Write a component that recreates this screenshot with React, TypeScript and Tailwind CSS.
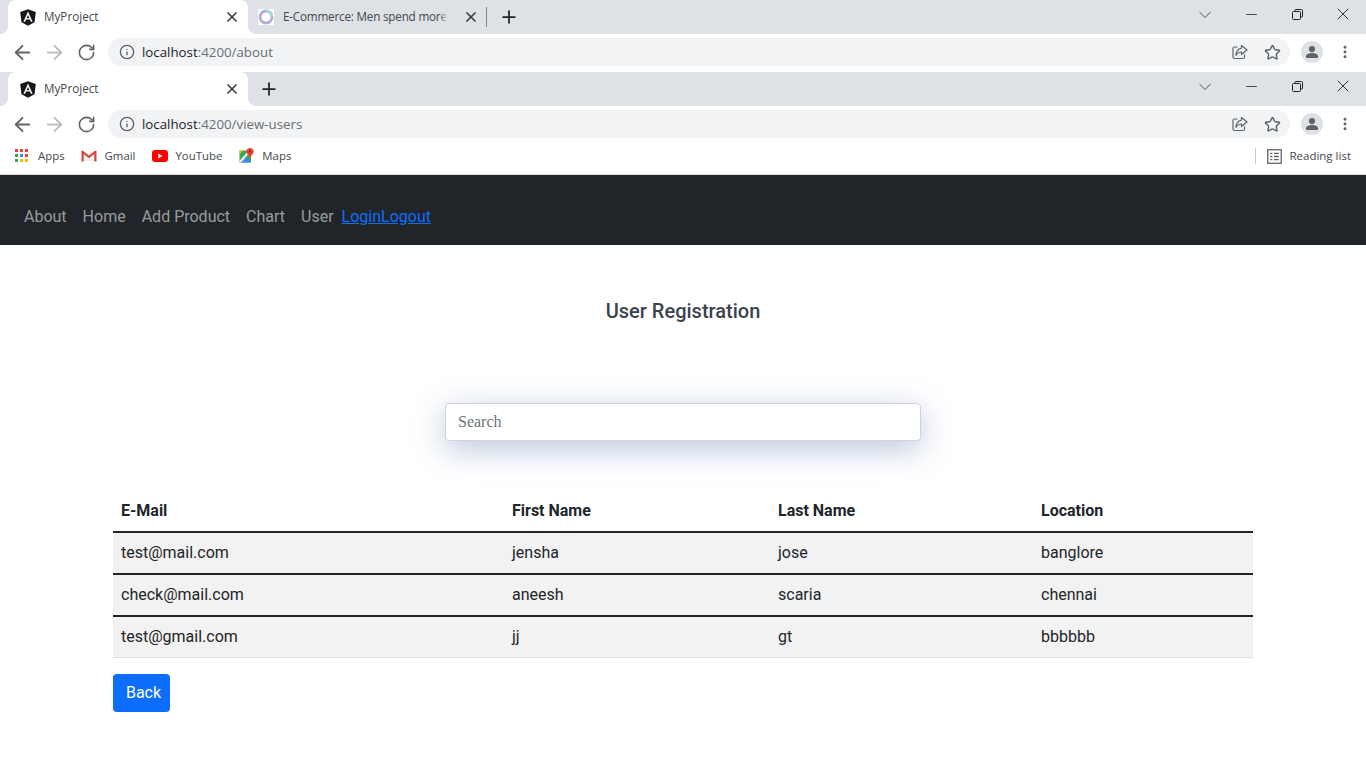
import { ArrowLeft, ArrowRight, RotateCw, Info, Star, MoreVertical, X, Plus, ChevronDown, Minus } from "lucide-react";

const chromeFont = { fontFamily: '"Open Sans", "Noto Sans", sans-serif' };

function AngularLogo() {
  return (
    <svg width="16" height="17" viewBox="0 0 16 17">
      <path d="M8 0.3 L15.8 3 L14.5 13.2 L8 16.8 L1.5 13.2 L0.2 3 Z" fill="#16181b" />
      <path d="M8 2.6 L3.4 12.8 H5.1 L6 10.5 H10 L10.9 12.8 H12.6 Z M8 6 L9.4 9.2 H6.6 Z" fill="#fff" fillRule="evenodd" />
    </svg>
  );
}

function ShareIcon() {
  return (
    <svg width="16" height="16" viewBox="0 0 16 16" fill="none" stroke="#5f6368" strokeWidth="1.2">
      <path d="M5.5 3 H2.5 Q1 3 1 4.5 V13 Q1 14.5 2.5 14.5 H11 Q12.5 14.5 12.5 13 V10.5" />
      <path d="M9.5 1.5 L15 6 L9.5 10.5 V8 Q6 7.8 4 11.5 Q4.2 5.5 9.5 4 Z" strokeLinejoin="round" />
    </svg>
  );
}

function Avatar() {
  return (
    <div className="w-[22px] h-[22px] rounded-full bg-[#dee1e6] overflow-hidden flex items-center justify-center">
      <svg width="14" height="14" viewBox="0 0 14 14" fill="#5f6368">
        <circle cx="7" cy="4" r="3.1" />
        <path d="M1 13 V11.3 C1 9 4.5 8 7 8 C9.5 8 13 9 13 11.3 V13 Z" />
      </svg>
    </div>
  );
}

function RestoreIcon() {
  return (
    <svg width="11" height="11" viewBox="0 0 11 11" fill="none" stroke="#202124" strokeWidth="1">
      <rect x="0.5" y="2.5" width="8" height="8" rx="1" />
      <path d="M3 2.5 V1.5 Q3 0.5 4 0.5 H9.5 Q10.5 0.5 10.5 1.5 V7 Q10.5 8 9.5 8 H8.5" />
    </svg>
  );
}

function Tab({ title, logo }: { title: string; logo: React.ReactNode }) {
  return (
    <div className="relative w-[240px] h-[34px] bg-white rounded-t-lg flex items-center pl-[12px] pr-[8px] shrink-0">
      {/* flared bottom corners */}
      <div className="absolute -left-[8px] bottom-0 w-[8px] h-[8px] bg-white">
        <div className="w-full h-full bg-[#dee1e6] rounded-br-lg" />
      </div>
      <div className="absolute -right-[8px] bottom-0 w-[8px] h-[8px] bg-white">
        <div className="w-full h-full bg-[#dee1e6] rounded-bl-lg" />
      </div>
      {logo}
      <span className="ml-[8px] text-[11.7px] text-[#45484d] flex-1 whitespace-nowrap">{title}</span>
      <X size={16} color="#3c4043" strokeWidth={2.6} />
    </div>
  );
}

function WindowControls() {
  return (
    <div className="ml-auto flex items-center h-full">
      <ChevronDown size={20} color="#3c4043" strokeWidth={1.1} className="mb-[4px]" />
      <div className="w-[46px] ml-[13px] mb-[6px] flex justify-center"><Minus size={17} color="#202124" strokeWidth={1.1} /></div>
      <div className="w-[46px] mb-[6px] flex justify-center"><RestoreIcon /></div>
      <div className="w-[46px] mb-[6px] flex justify-center"><X size={20} color="#202124" strokeWidth={1.1} /></div>
    </div>
  );
}

function Toolbar({ host, path, h }: { host: string; path: string; h: string }) {
  return (
    <div className={`${h} bg-white flex items-start`}>
      <div className="flex items-center h-[28px] mt-[4px] w-full">
        <ArrowLeft size={23} color="#5f6368" strokeWidth={1.9} className="ml-[10.5px]" />
        <ArrowRight size={23} color="#bcbfc3" strokeWidth={1.9} className="ml-[9px]" />
        <RotateCw size={19} color="#5f6368" strokeWidth={2} className="ml-[11px]" />
        <div className="ml-[12.5px] w-[1182px] h-[28px] rounded-full bg-[#f1f3f4] flex items-center pl-[11px] pr-[9.5px]">
          <Info size={16} color="#5f6368" strokeWidth={2} />
          <span className="ml-[7px] pt-[2px] text-[13.3px] text-[#202124] whitespace-nowrap">{host}<span className="text-[#6a6e73]">{path}</span></span>
          <div className="ml-auto flex items-center gap-[16px]">
            <ShareIcon />
            <Star size={17} color="#5f6368" strokeWidth={2} />
          </div>
        </div>
        <div className="ml-[11px]"><Avatar /></div>
        <MoreVertical size={16} color="#5f6368" strokeWidth={2.4} className="ml-[14px]" />
      </div>
    </div>
  );
}

function Bookmark({ icon, label, gap }: { icon: React.ReactNode; label: string; gap: string }) {
  return (
    <div className={`flex items-center ${gap}`}>
      {icon}
      <span className="text-[11.4px] text-[#45484d] whitespace-nowrap">{label}</span>
    </div>
  );
}

const appColors = ["#ea4335", "#ea4335", "#ea4335", "#34a853", "#4285f4", "#ea4335", "#34a853", "#fbbc04", "#fbbc04"];

function AppsIcon() {
  return (
    <div className="grid grid-cols-3 gap-[2px] w-[13px]">
      {appColors.map((c, i) => (
        <div key={i} className="w-[3px] h-[3px]" style={{ background: c }} />
      ))}
    </div>
  );
}

function GmailIcon() {
  return (
    <svg width="16" height="12" viewBox="0 0 16 12">
      <path d="M1 1 L8 6.5 L15 1 V11 H1 Z" fill="#eeeeee" />
      <path d="M0.5 11.5 V0.8 L2 0.8 L8 5.6 L14 0.8 L15.5 0.8 V11.5 H13.3 V4 L8 8.2 L2.7 4 V11.5 Z" fill="#d6463a" />
    </svg>
  );
}

function YoutubeIcon() {
  return (
    <svg width="16" height="12" viewBox="0 0 16 12">
      <rect width="16" height="12" rx="3" fill="#ff0000" />
      <path d="M6.3 3.5 L10.5 6 L6.3 8.5 Z" fill="#fff" />
    </svg>
  );
}

function MapsIcon() {
  return (
    <svg width="15" height="15" viewBox="0 0 15 15">
      <path d="M0.5 2.5 H12 V14.5 H0.5 Z" fill="#34a853" />
      <path d="M1.5 14.5 L6.5 9 L12 14.5 Z" fill="#4285f4" />
      <path d="M0.5 2.5 H4 L0.5 6.5 Z" fill="#fbbc04" />
      <path d="M0.5 13 L9 3 L10.5 5 L2 14.5 H0.5 Z" fill="#f1f1ea" />
      <path d="M11 0 C13 0 14.7 1.5 14.7 3.5 C14.7 5.8 12 7.5 11 10 C10 7.5 7.3 5.8 7.3 3.5 C7.3 1.5 9 0 11 0 Z" fill="#ea4335" />
      <circle cx="11" cy="3.5" r="1.2" fill="#a52714" />
    </svg>
  );
}

function ReadingIcon() {
  return (
    <svg width="15" height="15" viewBox="0 0 14 14" fill="none" stroke="#5f6368" strokeWidth="1.2">
      <rect x="0.7" y="0.7" width="12.6" height="12.6" />
      <path d="M3 4 H5 M6.5 4 H11 M3 7 H5 M6.5 7 H11 M3 10 H5 M6.5 10 H11" />
    </svg>
  );
}

function Ecommerce() {
  return (
    <svg width="16" height="16" viewBox="0 0 16 16" fill="none" strokeWidth="2.8">
      <rect width="16" height="16" fill="#fff" />
      <circle cx="8" cy="8" r="6" stroke="#b2aed8" />
      <path d="M8 2 A6 6 0 0 1 14 8" stroke="#a2dcd4" />
    </svg>
  );
}

const navItems = ["About", "Home", "Add Product", "Chart", "User"];

const users = [
  { email: "test@mail.com", first: "jensha", last: "jose", loc: "banglore" },
  { email: "check@mail.com", first: "aneesh", last: "scaria", loc: "chennai" },
  { email: "test@gmail.com", first: "jj", last: "gt", loc: "bbbbbb" },
];

export default function App() {
  return (
    <div className="min-h-[768px] bg-white overflow-hidden font-['Roboto',sans-serif]">
      <div style={chromeFont}>
        {/* first browser window */}
        <div className="h-[34px] bg-[#dee1e6] flex pl-[8px]">
          <Tab title="MyProject" logo={<AngularLogo />} />
          <div className="w-[240px] flex items-center pl-[10px] relative">
            <Ecommerce />
            <div className="relative ml-[9px] w-[165px] overflow-hidden">
              <span className="block text-[11.7px] tracking-[-0.2px] text-[#45484d] whitespace-nowrap">E-Commerce: Men spend more than</span>
              <div className="absolute right-0 top-0 h-full w-[8px] bg-gradient-to-r from-transparent to-[#dee1e6]" />
            </div>
            <X size={16} color="#3c4043" strokeWidth={2.6} className="ml-[15px]" />
            <div className="ml-[7px] w-[1px] h-[20px] bg-[#80868b]" />
          </div>
          <Plus size={20} color="#202124" strokeWidth={2.1} className="self-center ml-[11px]" />
          <WindowControls />
        </div>
        <Toolbar h="h-[38px]" host="localhost" path=":4200/about" />
        {/* second browser window */}
        <div className="h-[34px] bg-[#dee1e6] flex pl-[8px]">
          <Tab title="MyProject" logo={<AngularLogo />} />
          <Plus size={20} color="#202124" strokeWidth={2.1} className="self-center ml-[11px]" />
          <WindowControls />
        </div>
        <Toolbar h="h-[32px]" host="localhost" path=":4200/view-users" />
        <div className="h-[37px] bg-white border-b border-[#d9dbde] flex items-center pl-[15px]">
          <Bookmark icon={<AppsIcon />} label="Apps" gap="gap-[10px]" />
          <div className="ml-[16px]"><Bookmark icon={<GmailIcon />} label="Gmail" gap="gap-[8px]" /></div>
          <div className="ml-[16px]"><Bookmark icon={<YoutubeIcon />} label="YouTube" gap="gap-[8px]" /></div>
          <div className="ml-[17px]"><Bookmark icon={<MapsIcon />} label="Maps" gap="gap-[8px]" /></div>
          <div className="ml-auto flex items-center">
            <div className="w-[1px] h-[16px] bg-[#c8cacd] mr-[11px]" />
            <ReadingIcon />
            <span className="ml-[7.5px] mr-[15px] text-[11.5px] text-[#45484d] whitespace-nowrap">Reading list</span>
          </div>
        </div>
      </div>

      <nav className="h-[70px] bg-[#212529] flex items-center pl-[16px] pt-[14px] text-[16px]">
        {navItems.map((n) => (
          <a key={n} className="px-[8px] text-[#ffffff8c] whitespace-nowrap">{n}</a>
        ))}
        <a className="text-[#0d6efd] underline">Login</a>
        <a className="text-[#0d6efd] underline">Logout</a>
      </nav>

      <h2 className="mt-[52px] text-center text-[20px] leading-[28px] font-medium text-[#3b4350]">User Registration</h2>

      <div className="mt-[78px] flex justify-center">
        <input
          placeholder="Search"
          className="w-[476px] h-[38px] rounded-[4px] border border-[#ced4da] bg-white px-[12px] text-[16px] font-['Liberation_Serif',serif] placeholder:text-[#6c757d] shadow-[0_8px_32px_rgba(80,110,165,0.4)] outline-none"
        />
      </div>

      <div className="mx-[113px] mt-[48px]">
        <table className="w-[1140px] table-fixed border-collapse text-[16px] text-[#212529]">
          <thead>
            <tr className="border-b-2 border-[#212529] h-[43px]">
              <th className="w-[391px] px-[8px] pt-[2px] text-left font-bold">E-Mail</th>
              <th className="w-[266px] px-[8px] pt-[2px] text-left font-bold">First Name</th>
              <th className="w-[263px] px-[8px] pt-[2px] text-left font-bold">Last Name</th>
              <th className="px-[8px] pt-[2px] text-left font-bold">Location</th>
            </tr>
          </thead>
          <tbody>
            {users.map((u, i) => (
              <tr key={u.email} className={`bg-[#f2f2f2] border-b ${i < 2 ? "h-[42px] border-b-2 border-[#212529]" : "h-[41px] border-[#dee2e6]"}`}>
                <td className="px-[8px]">{u.email}</td>
                <td className="px-[8px]">{u.first}</td>
                <td className="px-[8px]">{u.last}</td>
                <td className="px-[8px]">{u.loc}</td>
              </tr>
            ))}
          </tbody>
        </table>
        <button className="mt-[16px] w-[57px] h-[38px] rounded-[4px] bg-[#0d6efd] text-white text-[16px] pl-[4px] text-center">Back</button>
      </div>
    </div>
  );
}
